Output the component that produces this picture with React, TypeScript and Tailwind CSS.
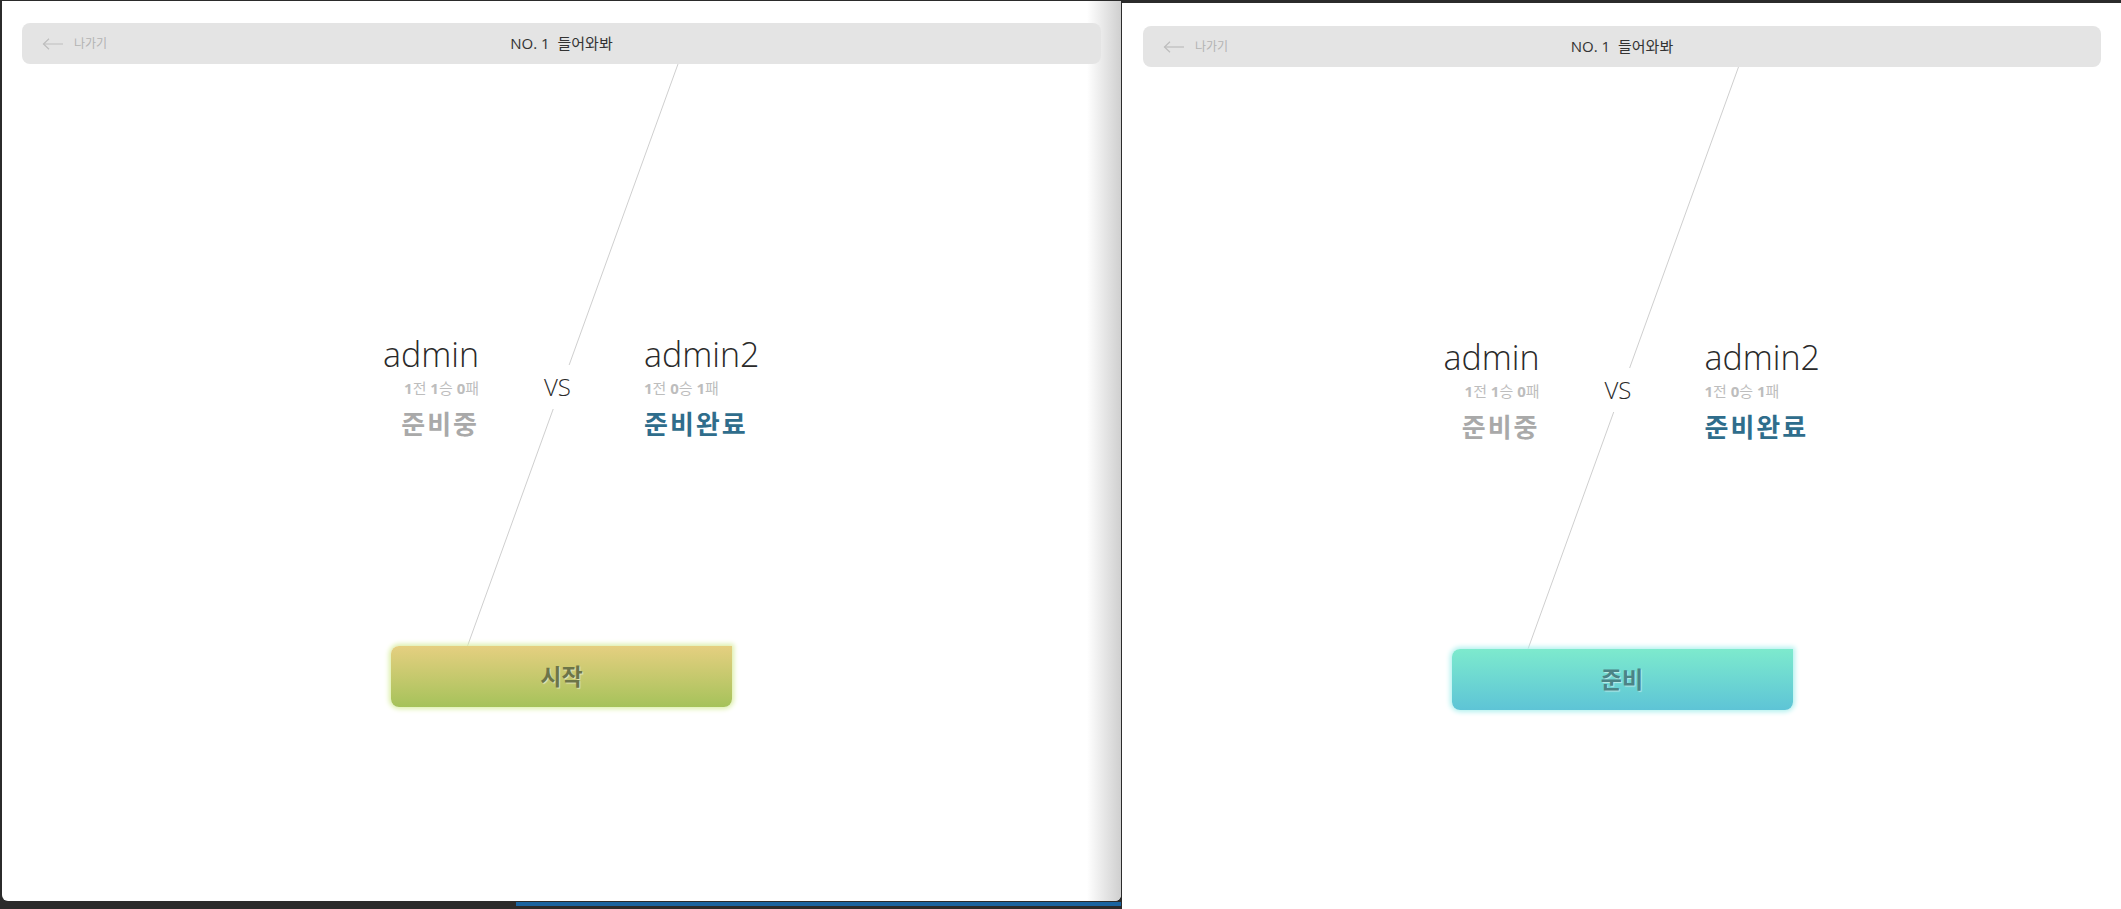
import React from "react"

type Player = {
  name: string
  games: number
  wins: number
  losses: number
  ready: boolean
}

const font = "font-['Open_Sans','Noto_Sans_CJK_KR',sans-serif]"

function BackArrow() {
  return (
    <svg width="22" height="12" viewBox="0 0 22 12" fill="none" stroke="#bdbdbd" strokeWidth="1.2">
      <path d="M21 6H1.5" />
      <path d="M7 0.8L1.5 6L7 11.2" />
    </svg>
  )
}

function RoomHeader() {
  return (
    <div className="grid h-[41px] grid-cols-[1fr_auto_1fr] items-center rounded-lg bg-[#e4e4e4] px-5">
      <div className="flex items-center gap-[10px]">
        <BackArrow />
        <span className="text-[12px] text-[#b3b3b3]">나가기</span>
      </div>
      <div className="text-[15px] text-[#333]">NO. 1&nbsp; 들어와봐</div>
      <div />
    </div>
  )
}

function Record({ p }: { p: Player }) {
  return (
    <div className="text-[15px] leading-[20px] text-[#bdbdbd]">
      <b>{p.games}</b>전 <b>{p.wins}</b>승 <b>{p.losses}</b>패
    </div>
  )
}

function PlayerCol({ p, align }: { p: Player; align: "left" | "right" }) {
  return (
    <div className={align === "right" ? "flex w-[240px] flex-col items-end" : "flex w-[240px] flex-col items-start"}>
      <div className="text-[34px] font-light leading-[40px] text-[#2a2a2a]">{p.name}</div>
      <div className="mt-1">
        <Record p={p} />
      </div>
      <div
        className={
          p.ready
            ? "mt-[10px] text-[26px] font-bold leading-[32px] tracking-[2px] text-[#2f6d8c]"
            : "mt-[10px] text-[26px] font-bold leading-[32px] tracking-[2px] text-[#a9a9a9]"
        }
      >
        {p.ready ? "준비완료" : "준비중"}
      </div>
    </div>
  )
}

function GameRoom({ width, mode }: { width: number; mode: "start" | "ready" }) {
  const players: Player[] = [
    { name: "admin", games: 1, wins: 1, losses: 0, ready: false },
    { name: "admin2", games: 1, wins: 0, losses: 1, ready: true },
  ]
  const cx = width / 2

  return (
    <div className="relative h-full w-full">
      {/* diagonal divider, header bottom to button top */}
      <svg className="absolute inset-0" width={width} height="880">
        <line x1={cx + 116.5} y1="41" x2={cx - 94} y2="623" stroke="#cfcfcf" strokeWidth="1" />
      </svg>

      <div className="relative flex flex-col">
        <RoomHeader />

        <div className="mt-[270px] flex items-center justify-center">
          <PlayerCol p={players[0]} align="right" />
          <div className="ml-[64px] mr-[72px] bg-white px-[1px] py-[10px] text-[24px] font-light leading-[24px] text-[#2a2a2a]">
            VS
          </div>
          <PlayerCol p={players[1]} align="left" />
        </div>

        <div className="mt-[206px] flex justify-center">
          {mode === "start" ? (
            <button className="flex h-[61px] w-[341px] items-center justify-center rounded-lg rounded-tr-none bg-gradient-to-b from-[#e5cf80] to-[#a5c25a] text-[23px] font-bold text-[#6d7548] shadow-[0_0_5px_2px_#dcefa8] [text-shadow:1px_1px_1px_rgba(255,255,255,0.55)]">
              시작
            </button>
          ) : (
            <button className="flex h-[61px] w-[341px] items-center justify-center rounded-lg rounded-tr-none bg-gradient-to-b from-[#7deacd] to-[#5ec4d6] text-[23px] font-bold text-[#4b8486] shadow-[0_0_5px_2px_#b2f1ef] [text-shadow:1px_1px_1px_rgba(255,255,255,0.55)]">
              준비
            </button>
          )}
        </div>
      </div>
    </div>
  )
}

export default function App() {
  return (
    <div className={`relative flex h-[909px] w-[2121px] overflow-hidden bg-[#2b2b2b] ${font}`}>
      {/* left browser window */}
      <div className="ml-[2px] mt-px flex h-[905px] w-[1119px] flex-none flex-col">
        <div className="relative h-[904px] overflow-hidden rounded-b-[6px] bg-white px-5 pt-[22px]">
          <div className="pointer-events-none absolute inset-y-0 right-0 w-[34px] bg-gradient-to-r from-white/0 to-[#cfcfcf]" />
          <GameRoom width={1079} mode="start" />
        </div>
        <div className="ml-[514px] mt-px h-[4px] bg-[#1a64a0]" />
      </div>

      {/* right browser window */}
      <div className="ml-px mt-[3px] h-[906px] w-[999px] flex-none bg-white pl-[21px] pr-5 pt-[23px]">
        <GameRoom width={958} mode="ready" />
      </div>
    </div>
  )
}
